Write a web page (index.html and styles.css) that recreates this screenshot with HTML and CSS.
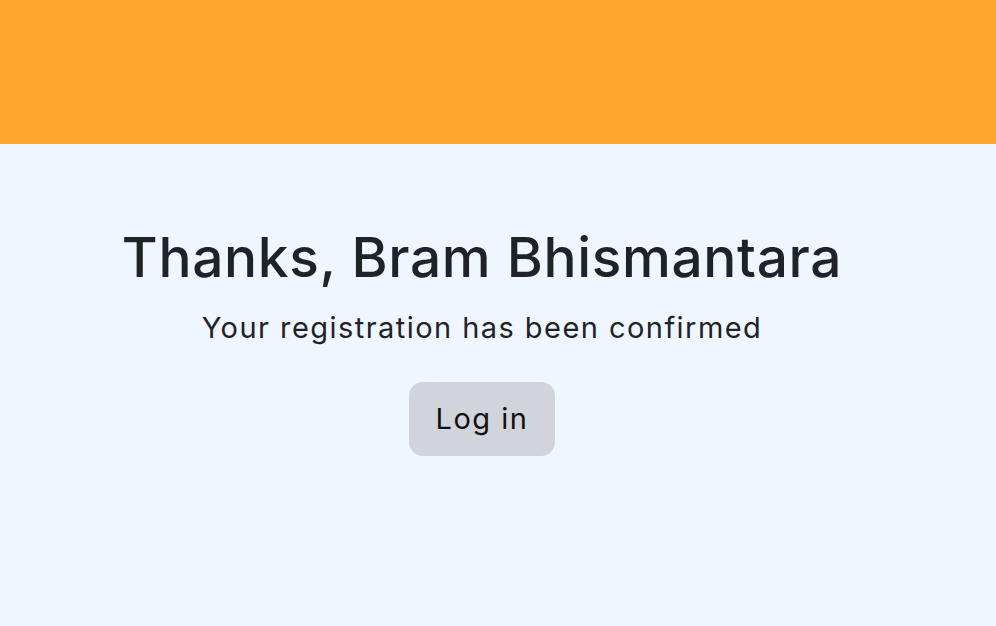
FILE: index.html
```html
<!DOCTYPE html>
<html lang="en">
<head>
<meta charset="utf-8">
<title>Registration confirmed</title>
<link rel="stylesheet" href="styles.css">
</head>
<body>
<header class="topbar"></header>
<main class="content">
  <h1 class="title">Thanks, Bram Bhismantara</h1>
  <p class="subtitle">Your registration has been confirmed</p>
  <button class="login" type="button">Log in</button>
</main>
</body>
</html>
```

FILE: styles.css
```css
html, body {
  margin: 0;
  padding: 0;
  height: 100%;
}
body {
  background: #eff6ff;
  font-family: Inter, "Noto Sans", sans-serif;
  color: #1f2328;
}
.topbar {
  height: 144px;
  background: #ffa62e;
}
.content {
  display: flex;
  flex-direction: column;
  align-items: center;
  padding: 80px 32px 0 0;
}
.title {
  margin: 0;
  font-size: 55px;
  font-weight: 500;
  line-height: 1.2;
  letter-spacing: 0.65px;
}
.subtitle {
  margin: 19px 0 0;
  font-size: 29px;
  font-weight: 400;
  line-height: 1.3;
  letter-spacing: 1.45px;
}
.login {
  margin-top: 35px;
  font-family: inherit;
  font-size: 29px;
  color: #111;
  background: #d1d5db;
  border: none;
  border-radius: 14px;
  padding: 14px 27px;
  line-height: 1.6;
  letter-spacing: 1.5px;
}
```
